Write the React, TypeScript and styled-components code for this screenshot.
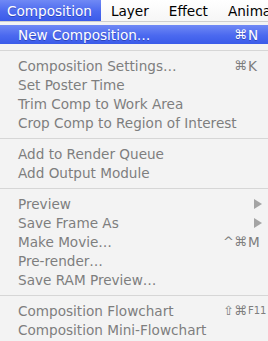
import styled, { createGlobalStyle } from "styled-components";

const GlobalStyle = createGlobalStyle`
  html, body {
    margin: 0;
    padding: 0;
    background: #f3f3f3;
    overflow: hidden;
  }
`;

type Entry =
  | { kind: "item"; label: string; mods?: string; keyName?: string; small?: boolean; submenu?: boolean; active?: boolean }
  | { kind: "sep" };

const entries: Entry[] = [
  { kind: "item", label: "New Composition…", mods: "⌘", keyName: "N", active: true },
  { kind: "sep" },
  { kind: "item", label: "Composition Settings…", mods: "⌘", keyName: "K" },
  { kind: "item", label: "Set Poster Time" },
  { kind: "item", label: "Trim Comp to Work Area" },
  { kind: "item", label: "Crop Comp to Region of Interest" },
  { kind: "sep" },
  { kind: "item", label: "Add to Render Queue" },
  { kind: "item", label: "Add Output Module" },
  { kind: "sep" },
  { kind: "item", label: "Preview", submenu: true },
  { kind: "item", label: "Save Frame As", submenu: true },
  { kind: "item", label: "Make Movie…", mods: "^⌘", keyName: "M" },
  { kind: "item", label: "Pre-render…" },
  { kind: "item", label: "Save RAM Preview…" },
  { kind: "sep" },
  { kind: "item", label: "Composition Flowchart", mods: "⇧⌘", keyName: "F11", small: true },
  { kind: "item", label: "Composition Mini-Flowchart" },
];

const barItems = ["Composition", "Layer", "Effect", "Animation"];

export default function App() {
  return (
    <>
      <GlobalStyle />
      <Screen>
        <MenuBar>
          {barItems.map((name, i) => (
            <BarItem key={name} $open={i === 0}>
              {name}
            </BarItem>
          ))}
        </MenuBar>
        <Menu>
          {entries.map((e, i) =>
            e.kind === "sep" ? (
              <Separator key={i} />
            ) : (
              <Item key={i} $active={!!e.active}>
                <Label>{e.label}</Label>
                {e.mods && <Mods>{e.mods}</Mods>}
                <KeyCol $small={!!e.small}>
                  {e.keyName}
                  {e.submenu && <Arrow />}
                </KeyCol>
              </Item>
            )
          )}
        </Menu>
      </Screen>
    </>
  );
}

const Screen = styled.div`
  width: 268px;
  height: 341px;
  overflow: hidden;
  font-family: "DejaVu Sans", "Liberation Sans", sans-serif;
  background: #f3f3f3;
`;

const MenuBar = styled.div`
  display: flex;
  height: 21px;
  background: linear-gradient(#ffffff, #f6f6f6);
  border-bottom: 1px solid #cfcfcf;
  white-space: nowrap;
  overflow: hidden;
`;

const BarItem = styled.div<{ $open: boolean }>`
  display: flex;
  align-items: center;
  padding: 0 10px;
  font-size: 13.6px;
  color: ${(p) => (p.$open ? "#fff" : "#000")};
  background: ${(p) => (p.$open ? "linear-gradient(#7089f5, #4b69ef 55%, #3a5be9)" : "none")};
  text-shadow: ${(p) => (p.$open ? "0 1px 0 rgba(0,0,60,0.3)" : "none")};

  &:first-child {
    padding-left: 7px;
    padding-right: 9px;
  }
`;

const Menu = styled.div`
  padding-top: 3px;
  display: flex;
  flex-direction: column;
`;

const Item = styled.div<{ $active: boolean }>`
  display: flex;
  align-items: center;
  height: 19px;
  padding-left: 18px;
  font-size: 13.6px;
  white-space: nowrap;
  color: ${(p) => (p.$active ? "#fff" : "#7e7e7e")};
  background: ${(p) => (p.$active ? "linear-gradient(#7089f5, #4b69ef 55%, #3a5be9)" : "none")};
  text-shadow: ${(p) => (p.$active ? "0 1px 0 rgba(0,0,60,0.3)" : "none")};
`;

const Label = styled.span`
  flex: 1;
`;

const Mods = styled.span`
  font-size: 13px;
`;

const KeyCol = styled.span<{ $small: boolean }>`
  width: 20px;
  padding-left: 1px;
  font-size: ${(p) => (p.$small ? "10px" : "13.6px")};
  display: flex;
  align-items: center;
`;

const Arrow = styled.span`
  margin-left: 6px;
  width: 0;
  height: 0;
  border-top: 5px solid transparent;
  border-bottom: 5px solid transparent;
  border-left: 8px solid #a4a4a4;
`;

const Separator = styled.div`
  height: 12px;
  display: flex;
  align-items: center;

  &::before {
    content: "";
    flex: 1;
    height: 1px;
    background: #d6d6d6;
  }
`;
